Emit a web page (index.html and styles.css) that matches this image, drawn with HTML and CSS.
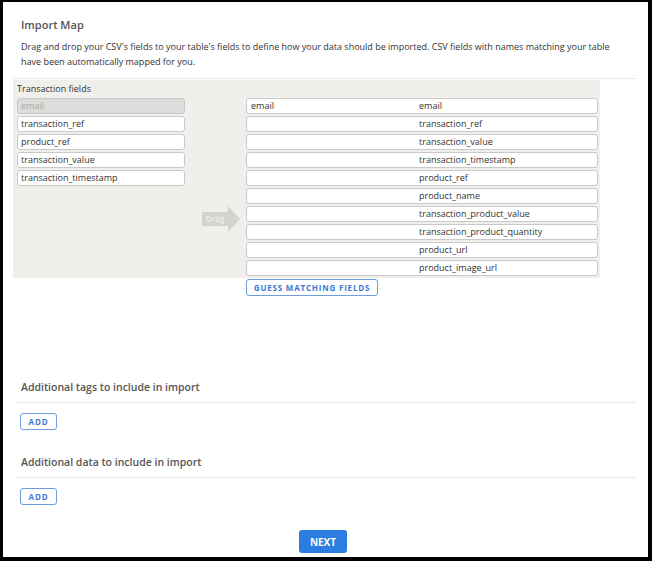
FILE: index.html
```html
<!DOCTYPE html>
<html lang="en">
<head>
  <meta charset="UTF-8">
  <meta name="viewport" content="width=device-width, initial-scale=1">
  <title>Import Map</title>
  <link rel="stylesheet" href="styles.css">
</head>
<body>

  <div class="frame">

    <div class="header">
      <h2 class="title">Import Map</h2>
      <p class="desc">Drag and drop your CSV's fields to your table's fields to define how your data should be imported. CSV fields with names matching your table have been automatically mapped for you.</p>
    </div>

    <div class="mapping">
      <div class="panel">
        <!-- CSV fields -->
        <div class="source">
          <div class="source-label">Transaction fields</div>
          <div class="field-list">
            <div class="field used">email</div>
            <div class="field">transaction_ref</div>
            <div class="field">product_ref</div>
            <div class="field">transaction_value</div>
            <div class="field">transaction_timestamp</div>
          </div>
        </div>

        <div class="middle">
          <div class="drag-arrow"><span>Drag</span></div>
        </div>

        <!-- Table fields -->
        <div class="target">
          <div class="target-row"><span class="slot">email</span><span class="name">email</span></div>
          <div class="target-row"><span class="slot"></span><span class="name">transaction_ref</span></div>
          <div class="target-row"><span class="slot"></span><span class="name">transaction_value</span></div>
          <div class="target-row"><span class="slot"></span><span class="name">transaction_timestamp</span></div>
          <div class="target-row"><span class="slot"></span><span class="name">product_ref</span></div>
          <div class="target-row"><span class="slot"></span><span class="name">product_name</span></div>
          <div class="target-row"><span class="slot"></span><span class="name">transaction_product_value</span></div>
          <div class="target-row"><span class="slot"></span><span class="name">transaction_product_quantity</span></div>
          <div class="target-row"><span class="slot"></span><span class="name">product_url</span></div>
          <div class="target-row"><span class="slot"></span><span class="name">product_image_url</span></div>
        </div>
      </div>

      <button class="btn-outline guess">Guess matching fields</button>
    </div>

    <div class="extra first">
      <h3 class="extra-title">Additional tags to include in import</h3>
    </div>
    <button class="btn-outline add">Add</button>

    <div class="extra">
      <h3 class="extra-title">Additional data to include in import</h3>
    </div>
    <button class="btn-outline add">Add</button>

    <div class="footer">
      <button class="btn-primary">Next</button>
    </div>

  </div>

</body>
</html>
```

FILE: styles.css
```css
* {
  box-sizing: border-box;
}

body {
  margin: 0;
  font-family: 'Open Sans', 'Liberation Sans', sans-serif;
  color: #333;
  background: #fff;
}

/* Outer black frame of the dialog */
.frame {
  height: 561px;
  border-style: solid;
  border-color: #000;
  border-width: 2px 4px 4px 3px;
  display: flex;
  flex-direction: column;
  align-items: flex-start;
}

.header {
  padding: 16px 0 0 18px;
}

.title {
  margin: 0;
  font-size: 11px;
  line-height: 14px;
  font-weight: 600;
  color: #555;
}

.desc {
  margin: 7px 0 0;
  font-size: 9px;
  line-height: 15px;
  color: #333;
  max-width: 598px;
}

/* Map section */
.mapping {
  align-self: stretch;
  margin: 9px 12px 0 10px;
  padding-top: 1px;
  border-top: 1px solid #e9e9e7;
}

.panel {
  display: flex;
  width: 587px;
  background: #f0efeb;
  padding: 0 2px 2px 4px;
}

.source {
  width: 168px;
}

.source-label {
  font-size: 9px;
  line-height: 18px;
  color: #333;
}

.field-list,
.target {
  display: flex;
  flex-direction: column;
  gap: 2px;
}

.field {
  height: 16px;
  border: 1px solid #c9c9c9;
  border-radius: 3px;
  background: #fff;
  font-size: 9px;
  line-height: 14px;
  padding-left: 3px;
  color: #333;
}

.field.used {
  background: #dcdcdb;
  color: #a9a9a9;
}

.middle {
  width: 61px;
}

.drag-arrow {
  position: relative;
  margin: 132px 0 0 17px;
  width: 26px;
  height: 14px;
  background: #d4d3cf;
  font-size: 8px;
  font-weight: 700;
  line-height: 14px;
  text-align: center;
  color: #eceae6;
}

.drag-arrow::after {
  content: '';
  position: absolute;
  left: 26px;
  top: -6px;
  border-left: 12px solid #d4d3cf;
  border-top: 13px solid transparent;
  border-bottom: 13px solid transparent;
}

.target {
  width: 352px;
  margin-top: 18px;
}

.target-row {
  display: flex;
  height: 16px;
  border: 1px solid #c9c9c9;
  border-radius: 3px;
  background: #fff;
  font-size: 9px;
  line-height: 14px;
  color: #333;
}

.slot {
  width: 172px;
  padding-left: 4px;
}

.name {
  flex: 1;
}

/* Buttons */
.btn-outline {
  display: block;
  height: 17px;
  border: 1px solid #6f9de0;
  border-radius: 3px;
  background: #fff;
  color: #3c78d4;
  font-family: inherit;
  font-size: 8px;
  font-weight: 700;
  letter-spacing: 0.8px;
  text-transform: uppercase;
  padding: 0;
  cursor: pointer;
}

.guess {
  width: 132px;
  margin: 1px 0 0 233px;
}

.add {
  width: 37px;
  margin: 10px 0 0 17px;
}

/* Additional sections */
.extra {
  align-self: stretch;
  margin: 25px 12px 0 13px;
  padding: 0 0 8px 5px;
  border-bottom: 1px solid #e9e9e7;
}

.extra.first {
  margin-top: 84px;
}

.extra-title {
  margin: 0;
  font-size: 10.5px;
  line-height: 14px;
  font-weight: 600;
  color: #555;
}

.footer {
  align-self: stretch;
  display: flex;
  justify-content: center;
  padding-right: 5px;
  margin-top: 25px;
}

.btn-primary {
  width: 48px;
  height: 23px;
  border: none;
  border-radius: 3px;
  background: #2b7de1;
  color: #fff;
  font-family: inherit;
  font-size: 10px;
  font-weight: 700;
  text-transform: uppercase;
  padding: 0;
  cursor: pointer;
}
```
